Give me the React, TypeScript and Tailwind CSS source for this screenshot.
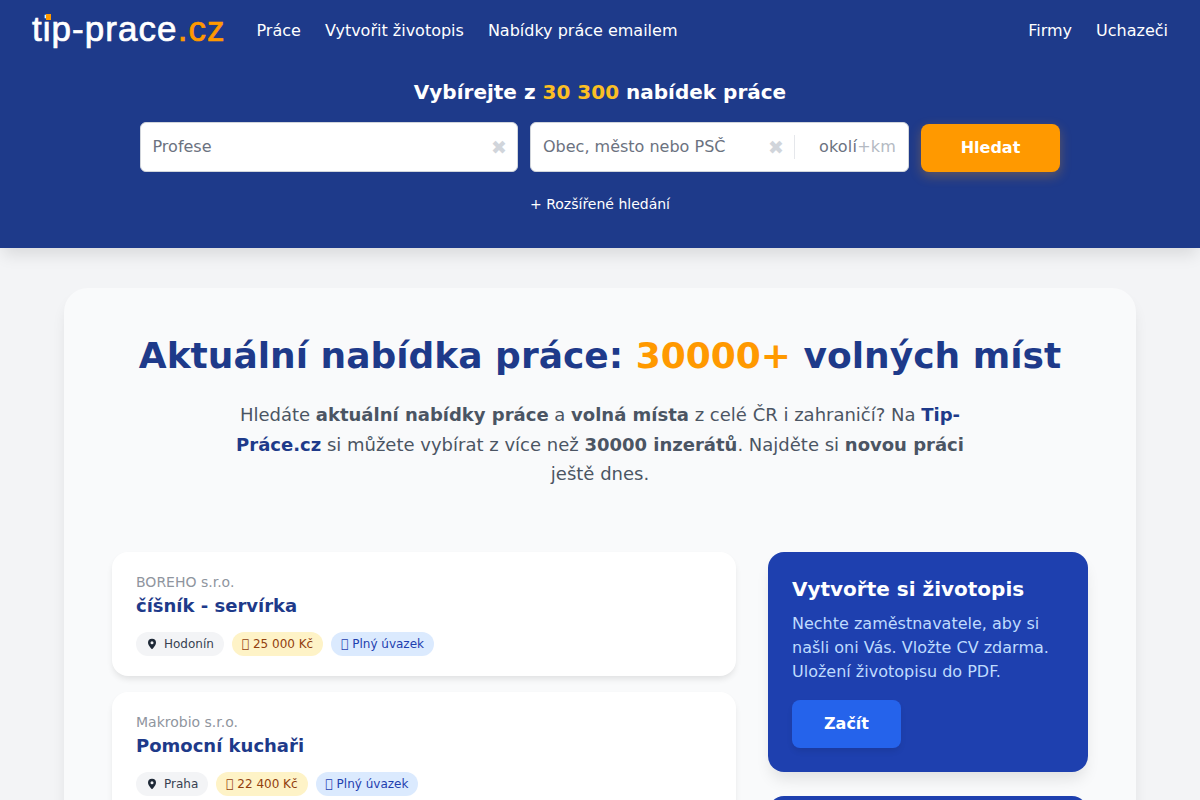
const dejavu = "font-['DejaVu_Sans',sans-serif]";

const jobs = [
  { company: "BOREHO s.r.o.", title: "číšník - servírka", city: "Hodonín", pay: "25 000 Kč" },
  { company: "Makrobio s.r.o.", title: "Pomocní kuchaři", city: "Praha", pay: "22 400 Kč" },
];

function ClearIcon({ className }: { className: string }) {
  return <span className={"text-[19px] leading-none select-none " + className}>✖</span>;
}

function Header() {
  return (
    <header className="h-[248px] bg-[#1e3a8a] shadow-[0_10px_15px_-3px_rgba(0,0,0,0.1)] relative">
      <div className="flex items-center justify-between h-[61px] pl-8 pr-8">
        <div className="flex items-center">
          <a className="relative mb-1 font-['Liberation_Sans',sans-serif] text-[35px] leading-[60px] tracking-[1.05px] text-white mr-[31px] [-webkit-text-stroke:0.7px_white]">
            tip-prace<span className="text-[#ff9900] [-webkit-text-stroke:0.7px_#ff9900]">.cz</span>
            {/* orange dot of the i */}
            <span className="absolute left-[14px] top-[15px] w-[5px] h-[6px] bg-[#ff9900]" />
          </a>
          <nav className="flex gap-6 text-white text-base">
            <a>Práce</a>
            <a>Vytvořit životopis</a>
            <a>Nabídky práce emailem</a>
          </nav>
        </div>
        <nav className="flex gap-6 text-white text-base">
          <a>Firmy</a>
          <a>Uchazeči</a>
        </nav>
      </div>
      <h2 className="text-center text-white text-xl font-bold leading-7 mt-[17px]">
        Vybírejte z <span className="text-[#fbbf24]">30 300</span> nabídek práce
      </h2>
      <div className="flex justify-center items-center gap-3 mt-4 w-[920px] mx-auto">
        <div className="flex items-center justify-between w-[378px] h-[50px] bg-white rounded-md border border-[#d1d5db] pl-[11.5px] pr-2.5 text-base text-[#6b7280]">
          <span>Profese</span>
          <ClearIcon className="text-[#d1d5db]" />
        </div>
        <div className="flex items-center w-[379px] h-[50px] bg-white rounded-md border border-[#d1d5db] pl-3 pr-3 text-base text-[#6b7280]">
          <span className="flex-1">Obec, město nebo PSČ</span>
          <ClearIcon className="text-[#d1d5db]" />
          <span className="w-px h-6 bg-[#e5e7eb] ml-2.5 mr-6" />
          <span className="tracking-[0.2px]">
            okolí<span className="text-[#b4bac3]">+km</span>
          </span>
        </div>
        <button className="w-[139px] h-12 mt-0.5 rounded-lg bg-[#ff9900] text-white text-base font-bold shadow-[0_4px_12px_rgba(255,153,0,0.3)]">
          Hledat
        </button>
      </div>
      <p className="text-center text-white text-sm mt-[22px]">+ Rozšířené hledání</p>
    </header>
  );
}

function JobCard({ job }: { job: (typeof jobs)[number] }) {
  return (
    <article className="bg-white rounded-2xl px-6 pt-5 h-[124px] shadow-[0_4px_6px_-1px_rgba(0,0,0,0.1)]">
      <p className="text-sm leading-5 text-[#8f959e]">{job.company}</p>
      <h3 className="text-lg leading-7 font-bold text-[#1e3a8a]">{job.title}</h3>
      <div className="flex gap-2 mt-3 text-xs">
        <span className="flex items-center gap-1.5 h-6 px-2.5 rounded-full bg-[#f3f4f6] text-[#374151]">
          <svg viewBox="0 0 24 24" className="w-3 h-3 text-[#1f2937]" fill="currentColor">
            <path fillRule="evenodd" d="M12 1.5a8 8 0 0 0-8 8c0 5.600 8 13 8 13s8-7.400 8-13a8 8 0 0 0-8-8Zm0 5a3 3 0 1 1 0 6 3 3 0 0 1 0-6Z" />
          </svg>
          {job.city}
        </span>
        <span className="flex items-center h-6 px-2.5 rounded-full bg-[#fef3c7] text-[#92400e]">{"\uF155"} {job.pay}</span>
        <span className="flex items-center h-6 px-2.5 rounded-full bg-[#dbeafe] text-[#1e40af]">{"\uF0B1"} Plný úvazek</span>
      </div>
    </article>
  );
}

export default function App() {
  return (
    <div className={dejavu + " min-h-screen bg-[#f3f4f6] pb-10"}>
      <Header />
      <main className="w-[1072px] mx-auto mt-10 bg-[#f9fafb] rounded-3xl shadow-[0_10px_15px_-3px_rgba(0,0,0,0.1)] p-12">
        <h1 className="text-center text-[36px] leading-10 font-bold text-[#1e3a8a]">
          Aktuální nabídka práce: <span className="text-[#ff9900]">30000+</span> volných míst
        </h1>
        <p className="w-[768px] mx-auto mt-[24.4px] text-center text-lg leading-[29.25px] text-[#4b5563]">
          Hledáte <b>aktuální nabídky práce</b> a <b>volná místa</b> z celé ČR i zahraničí? Na{" "}
          <b className="text-[#1e3a8a]">Tip-Práce.cz</b> si můžete vybírat z více než <b>30000 inzerátů</b>. Najděte si{" "}
          <b>novou práci</b> ještě dnes.
        </p>
        <div className="grid grid-cols-[624px_320px] gap-8 mt-[63.6px]">
          <div className="flex flex-col gap-4">
            {jobs.map((job) => (
              <JobCard key={job.title} job={job} />
            ))}
          </div>
          <aside className="flex flex-col gap-6">
            <div className="h-[220px] rounded-2xl bg-[#1e40af] p-6 shadow-[0_10px_15px_-3px_rgba(0,0,0,0.1)]">
              <h3 className="text-xl leading-[26px] font-bold text-white">Vytvořte si životopis</h3>
              <p className="mt-2.5 text-base leading-6 text-[#bfdbfe]">
                Nechte zaměstnavatele, aby si našli oni Vás. Vložte CV zdarma. Uložení životopisu do PDF.
              </p>
              <button className="mt-4 w-[109px] h-12 rounded-lg bg-[#2563eb] text-white text-base font-bold shadow-[0_4px_6px_-1px_rgba(0,0,0,0.1)]">
                Začít
              </button>
            </div>
            <div className="h-[220px] rounded-2xl bg-[#1e40af]" />
          </aside>
        </div>
      </main>
    </div>
  );
}
